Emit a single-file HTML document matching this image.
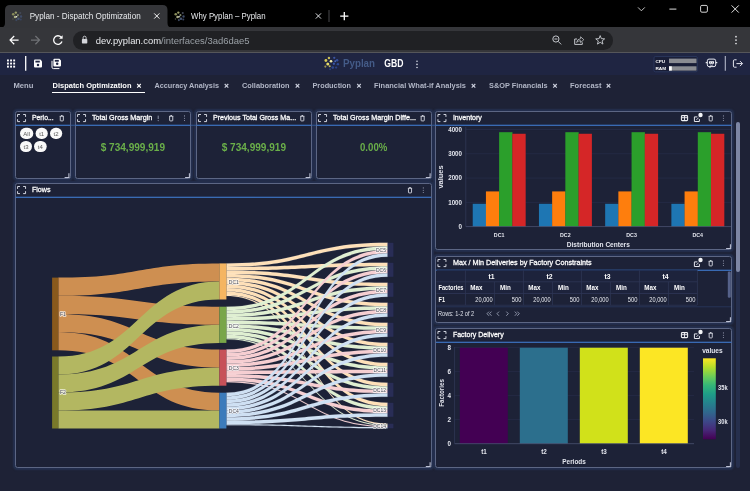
<!DOCTYPE html><html><head><meta charset="utf-8"><title>Pyplan - Dispatch Optimization</title><style>
*{margin:0;padding:0;box-sizing:border-box}
html,body{width:750px;height:491px;overflow:hidden;background:#1e2236;font-family:"Liberation Sans",sans-serif;color:#fff}
.abs{position:absolute}
#root{position:relative;width:750px;height:491px;overflow:hidden;background:#1e2236}
.w{position:absolute;border:1px solid #5c6684;border-radius:2.5px;background:#1d2237;box-shadow:0 0 1.5px 2px #24304f}
.hl{position:absolute;height:1.15px;background:#3d72bd}
svg{position:absolute;left:0;top:0;overflow:visible;will-change:transform;opacity:0.999}
</style></head><body><div id="root">
<div class="abs" style="left:0;top:0;width:750px;height:28px;background:#000"></div>
<div class="abs" style="left:0;top:27px;width:750px;height:26px;background:#35363a;border-bottom:1px solid #55565a"></div>
<div class="abs" style="left:72.5px;top:31px;width:540.5px;height:18.5px;background:#202124;border-radius:9.25px"></div>
<div class="abs" style="left:0;top:53px;width:750px;height:21.5px;background:#1f2542"></div>
<div class="abs" style="left:51.5px;top:92px;width:93.5px;height:1.4px;background:#fff"></div>
<div class="w" style="left:15px;top:111px;width:55.5px;height:68px"></div>
<div class="w" style="left:75px;top:111px;width:116px;height:68px"></div>
<div class="w" style="left:196px;top:111px;width:115.5px;height:68px"></div>
<div class="w" style="left:316px;top:111px;width:115.69999999999999px;height:68px"></div>
<div class="w" style="left:435.4px;top:111px;width:296.6px;height:139px"></div>
<div class="w" style="left:15px;top:183px;width:416.7px;height:285px"></div>
<div class="w" style="left:435.4px;top:256px;width:296.6px;height:67px"></div>
<div class="w" style="left:435.4px;top:328px;width:296.6px;height:140px"></div>
<div class="abs" style="left:736.3px;top:121.5px;width:3.6px;height:346px;background:#262f4d;border-radius:2px"></div>
<div class="abs" style="left:736.3px;top:121.5px;width:3.6px;height:150px;background:#7d86a4;border-radius:2px"></div>
<svg width="750" height="491" viewBox="0 0 750 491" font-family="Liberation Sans, sans-serif"><path d="M0.5,27.5 Q5,27.5 5,23 L5,10 Q5,5 10,5 L162.5,5 Q167.5,5 167.5,10 L167.5,23 Q167.5,27.5 172,27.5 Z" fill="#35363a"/><text x="29.70" y="18.90" font-size="8.6" fill="#e8eaed" font-weight="normal" text-anchor="start" textLength="111.0" lengthAdjust="spacingAndGlyphs" >Pyplan - Dispatch Optimization</text><text x="191.00" y="18.90" font-size="8.6" fill="#e8eaed" font-weight="normal" text-anchor="start" textLength="74.6" lengthAdjust="spacingAndGlyphs" >Why Pyplan – Pyplan</text><text x="95.80" y="43.70" font-size="9.6" fill="#e8eaed" font-weight="normal" text-anchor="start" textLength="65.2" lengthAdjust="spacingAndGlyphs" >dev.pyplan.com</text><text x="161.00" y="43.70" font-size="9.6" fill="#9aa0a6" font-weight="normal" text-anchor="start" textLength="88.6" lengthAdjust="spacingAndGlyphs" >/interfaces/3ad6dae5</text><text x="343.00" y="67.40" font-size="10.2" fill="#455c88" font-weight="bold" text-anchor="start" textLength="32.0" lengthAdjust="spacingAndGlyphs" >Pyplan</text><text x="384.20" y="67.40" font-size="10.2" fill="#fff" font-weight="bold" text-anchor="start" textLength="19.2" lengthAdjust="spacingAndGlyphs" >GBD</text><text x="13.40" y="87.80" font-size="8" fill="#b2b7c7" font-weight="bold" text-anchor="start" textLength="20.0" lengthAdjust="spacingAndGlyphs" >Menu</text><text x="52.50" y="87.80" font-size="8" fill="#fff" font-weight="bold" text-anchor="start" textLength="79.0" lengthAdjust="spacingAndGlyphs" >Dispatch Optimization</text><path d="M137.2,84.0l3.6,3.6m0,-3.6l-3.6,3.6" stroke="#fff" stroke-width="1.1" fill="none"/><text x="154.50" y="87.80" font-size="8" fill="#b2b7c7" font-weight="bold" text-anchor="start" textLength="64.5" lengthAdjust="spacingAndGlyphs" >Accuracy Analysis</text><path d="M224.7,84.0l3.6,3.6m0,-3.6l-3.6,3.6" stroke="#cfd3e0" stroke-width="1.1" fill="none"/><text x="242.00" y="87.80" font-size="8" fill="#b2b7c7" font-weight="bold" text-anchor="start" textLength="47.5" lengthAdjust="spacingAndGlyphs" >Collaboration</text><path d="M295.7,84.0l3.6,3.6m0,-3.6l-3.6,3.6" stroke="#cfd3e0" stroke-width="1.1" fill="none"/><text x="312.50" y="87.80" font-size="8" fill="#b2b7c7" font-weight="bold" text-anchor="start" textLength="38.5" lengthAdjust="spacingAndGlyphs" >Production</text><path d="M357.2,84.0l3.6,3.6m0,-3.6l-3.6,3.6" stroke="#cfd3e0" stroke-width="1.1" fill="none"/><text x="374.00" y="87.80" font-size="8" fill="#b2b7c7" font-weight="bold" text-anchor="start" textLength="92.0" lengthAdjust="spacingAndGlyphs" >Financial What-if Analysis</text><path d="M471.7,84.0l3.6,3.6m0,-3.6l-3.6,3.6" stroke="#cfd3e0" stroke-width="1.1" fill="none"/><text x="489.00" y="87.80" font-size="8" fill="#b2b7c7" font-weight="bold" text-anchor="start" textLength="58.5" lengthAdjust="spacingAndGlyphs" >S&amp;OP Financials</text><path d="M553.2,84.0l3.6,3.6m0,-3.6l-3.6,3.6" stroke="#cfd3e0" stroke-width="1.1" fill="none"/><text x="570.00" y="87.80" font-size="8" fill="#b2b7c7" font-weight="bold" text-anchor="start" textLength="31.5" lengthAdjust="spacingAndGlyphs" >Forecast</text><path d="M606.7,84.0l3.6,3.6m0,-3.6l-3.6,3.6" stroke="#cfd3e0" stroke-width="1.1" fill="none"/><rect x="15.5" y="124.7" width="54.5" height="1.2" fill="#3d74c2"/><path d="M17.55,116.9v-2.4h2.4 M23.150000000000002,114.5h2.4v2.4 M25.55,119.19999999999999v2.4h-2.4 M19.95,121.6h-2.4v-2.4" stroke="#dcdfe9" stroke-width="0.95" fill="none"/><text x="31.90" y="120.40" font-size="7.6" fill="#fff" font-weight="normal" text-anchor="start" textLength="21.8" lengthAdjust="spacingAndGlyphs" stroke="#fff" stroke-width="0.28">Perio...</text><path d="M64.60,177.50h4.3v-4.3" stroke="#c0c5d8" stroke-width="1.05" fill="none"/><path d="M59.699999999999996,116.3h4.2 M61.0,115.5h1.6 M60.25,116.4v3.9q0,0.6 0.6,0.6h1.9q0.6,0 0.6,-0.6v-3.9" stroke="#e4e6ee" stroke-width="0.85" fill="none" stroke-linejoin="round"/><rect x="75.5" y="124.7" width="115" height="1.2" fill="#3d74c2"/><path d="M77.55,116.9v-2.4h2.4 M83.14999999999999,114.5h2.4v2.4 M85.55,119.19999999999999v2.4h-2.4 M79.95,121.6h-2.4v-2.4" stroke="#dcdfe9" stroke-width="0.95" fill="none"/><text x="91.90" y="120.40" font-size="7.6" fill="#fff" font-weight="normal" text-anchor="start" textLength="60.5" lengthAdjust="spacingAndGlyphs" stroke="#fff" stroke-width="0.28">Total Gross Margin</text><path d="M185.10,177.50h4.3v-4.3" stroke="#c0c5d8" stroke-width="1.05" fill="none"/><path d="M158.2,115.6v3.4" stroke="#9aa0b6" stroke-width="0.9"/><circle cx="158.2" cy="120.6" r="0.55" fill="#9aa0b6"/><path d="M169.1,116.3h4.2 M170.39999999999998,115.5h1.6 M169.64999999999998,116.4v3.9q0,0.6 0.6,0.6h1.9q0.6,0 0.6,-0.6v-3.9" stroke="#e4e6ee" stroke-width="0.85" fill="none" stroke-linejoin="round"/><circle cx="184.5" cy="115.9" r="0.55" fill="#989eb4"/><circle cx="184.5" cy="118.2" r="0.55" fill="#989eb4"/><circle cx="184.5" cy="120.5" r="0.55" fill="#989eb4"/><rect x="196.5" y="124.7" width="114.5" height="1.2" fill="#3d74c2"/><path d="M198.55,116.9v-2.4h2.4 M204.15,114.5h2.4v2.4 M206.55,119.19999999999999v2.4h-2.4 M200.95000000000002,121.6h-2.4v-2.4" stroke="#dcdfe9" stroke-width="0.95" fill="none"/><text x="212.90" y="120.40" font-size="7.6" fill="#fff" font-weight="normal" text-anchor="start" textLength="83.3" lengthAdjust="spacingAndGlyphs" stroke="#fff" stroke-width="0.28">Previous Total Gross Ma...</text><path d="M305.60,177.50h4.3v-4.3" stroke="#c0c5d8" stroke-width="1.05" fill="none"/><path d="M300.2,116.3h4.2 M301.5,115.5h1.6 M300.75,116.4v3.9q0,0.6 0.6,0.6h1.9q0.6,0 0.6,-0.6v-3.9" stroke="#e4e6ee" stroke-width="0.85" fill="none" stroke-linejoin="round"/><rect x="316.5" y="124.7" width="114.69999999999999" height="1.2" fill="#3d74c2"/><path d="M318.55,116.9v-2.4h2.4 M324.15000000000003,114.5h2.4v2.4 M326.55,119.19999999999999v2.4h-2.4 M320.95,121.6h-2.4v-2.4" stroke="#dcdfe9" stroke-width="0.95" fill="none"/><text x="332.90" y="120.40" font-size="7.6" fill="#fff" font-weight="normal" text-anchor="start" textLength="83.0" lengthAdjust="spacingAndGlyphs" stroke="#fff" stroke-width="0.28">Total Gross Margin Diffe...</text><path d="M425.80,177.50h4.3v-4.3" stroke="#c0c5d8" stroke-width="1.05" fill="none"/><path d="M420.59999999999997,116.3h4.2 M421.9,115.5h1.6 M421.15,116.4v3.9q0,0.6 0.6,0.6h1.9q0.6,0 0.6,-0.6v-3.9" stroke="#e4e6ee" stroke-width="0.85" fill="none" stroke-linejoin="round"/><rect x="435.9" y="124.7" width="295.6" height="1.2" fill="#3d74c2"/><path d="M437.95,116.9v-2.4h2.4 M443.55,114.5h2.4v2.4 M445.95,119.19999999999999v2.4h-2.4 M440.34999999999997,121.6h-2.4v-2.4" stroke="#dcdfe9" stroke-width="0.95" fill="none"/><text x="452.90" y="120.40" font-size="7.6" fill="#fff" font-weight="normal" text-anchor="start" textLength="29.0" lengthAdjust="spacingAndGlyphs" stroke="#fff" stroke-width="0.28">Inventory</text><path d="M726.10,248.50h4.3v-4.3" stroke="#c0c5d8" stroke-width="1.05" fill="none"/><rect x="681.4" y="115.6" width="6.2" height="5" rx="0.9" fill="none" stroke="#f0f1f5" stroke-width="1.05"/><path d="M681.4,117.69999999999999h6.2 M684.5,115.6v5" stroke="#f0f1f5" stroke-width="0.9"/><path d="M697.4,116.9h-3v4.6h5v-2.4" fill="none" stroke="#e4e6ee" stroke-width="1"/><path d="M696.4,119.9l2.2,-2.2" stroke="#e4e6ee" stroke-width="0.9"/><circle cx="700.5" cy="115.0" r="2.2" fill="#f4f5f8"/><path d="M708.6,116.3h4.2 M709.9000000000001,115.5h1.6 M709.1500000000001,116.4v3.9q0,0.6 0.6,0.6h1.9q0.6,0 0.6,-0.6v-3.9" stroke="#e4e6ee" stroke-width="0.85" fill="none" stroke-linejoin="round"/><circle cx="723.4" cy="115.9" r="0.55" fill="#989eb4"/><circle cx="723.4" cy="118.2" r="0.55" fill="#989eb4"/><circle cx="723.4" cy="120.5" r="0.55" fill="#989eb4"/><rect x="15.5" y="196.7" width="415.7" height="1.2" fill="#3d74c2"/><path d="M17.55,188.9v-2.4h2.4 M23.150000000000002,186.5h2.4v2.4 M25.55,191.2v2.4h-2.4 M19.95,193.6h-2.4v-2.4" stroke="#dcdfe9" stroke-width="0.95" fill="none"/><text x="31.90" y="192.40" font-size="7.6" fill="#fff" font-weight="normal" text-anchor="start" textLength="18.7" lengthAdjust="spacingAndGlyphs" stroke="#fff" stroke-width="0.28">Flows</text><path d="M425.80,466.50h4.3v-4.3" stroke="#c0c5d8" stroke-width="1.05" fill="none"/><path d="M407.9,188.29999999999998h4.2 M409.2,187.5h1.6 M408.45,188.39999999999998v3.9q0,0.6 0.6,0.6h1.9q0.6,0 0.6,-0.6v-3.9" stroke="#e4e6ee" stroke-width="0.85" fill="none" stroke-linejoin="round"/><circle cx="423.3" cy="187.89999999999998" r="0.55" fill="#989eb4"/><circle cx="423.3" cy="190.2" r="0.55" fill="#989eb4"/><circle cx="423.3" cy="192.5" r="0.55" fill="#989eb4"/><rect x="435.9" y="269.7" width="295.6" height="1.2" fill="#3d74c2"/><path d="M437.95,261.9v-2.4h2.4 M443.55,259.5h2.4v2.4 M445.95,264.20000000000005v2.4h-2.4 M440.34999999999997,266.6h-2.4v-2.4" stroke="#dcdfe9" stroke-width="0.95" fill="none"/><text x="452.90" y="265.40" font-size="7.6" fill="#fff" font-weight="normal" text-anchor="start" textLength="138.7" lengthAdjust="spacingAndGlyphs" stroke="#fff" stroke-width="0.28">Max / Min Deliveries by Factory Constraints</text><path d="M726.10,321.50h4.3v-4.3" stroke="#c0c5d8" stroke-width="1.05" fill="none"/><path d="M697.4,261.9h-3v4.6h5v-2.4" fill="none" stroke="#e4e6ee" stroke-width="1"/><path d="M696.4,264.9l2.2,-2.2" stroke="#e4e6ee" stroke-width="0.9"/><circle cx="700.5" cy="260.0" r="2.2" fill="#f4f5f8"/><path d="M708.6,261.3h4.2 M709.9000000000001,260.5h1.6 M709.1500000000001,261.4v3.9q0,0.6 0.6,0.6h1.9q0.6,0 0.6,-0.6v-3.9" stroke="#e4e6ee" stroke-width="0.85" fill="none" stroke-linejoin="round"/><circle cx="723.4" cy="260.9" r="0.55" fill="#989eb4"/><circle cx="723.4" cy="263.2" r="0.55" fill="#989eb4"/><circle cx="723.4" cy="265.5" r="0.55" fill="#989eb4"/><rect x="435.9" y="341.7" width="295.6" height="1.2" fill="#3d74c2"/><path d="M437.95,333.9v-2.4h2.4 M443.55,331.5h2.4v2.4 M445.95,336.20000000000005v2.4h-2.4 M440.34999999999997,338.6h-2.4v-2.4" stroke="#dcdfe9" stroke-width="0.95" fill="none"/><text x="452.90" y="337.40" font-size="7.6" fill="#fff" font-weight="normal" text-anchor="start" textLength="50.8" lengthAdjust="spacingAndGlyphs" stroke="#fff" stroke-width="0.28">Factory Delivery</text><path d="M726.10,466.50h4.3v-4.3" stroke="#c0c5d8" stroke-width="1.05" fill="none"/><rect x="681.4" y="332.6" width="6.2" height="5" rx="0.9" fill="none" stroke="#f0f1f5" stroke-width="1.05"/><path d="M681.4,334.70000000000005h6.2 M684.5,332.6v5" stroke="#f0f1f5" stroke-width="0.9"/><path d="M697.4,333.9h-3v4.6h5v-2.4" fill="none" stroke="#e4e6ee" stroke-width="1"/><path d="M696.4,336.9l2.2,-2.2" stroke="#e4e6ee" stroke-width="0.9"/><circle cx="700.5" cy="332.0" r="2.2" fill="#f4f5f8"/><path d="M708.6,333.3h4.2 M709.9000000000001,332.5h1.6 M709.1500000000001,333.4v3.9q0,0.6 0.6,0.6h1.9q0.6,0 0.6,-0.6v-3.9" stroke="#e4e6ee" stroke-width="0.85" fill="none" stroke-linejoin="round"/><circle cx="723.4" cy="332.9" r="0.55" fill="#989eb4"/><circle cx="723.4" cy="335.2" r="0.55" fill="#989eb4"/><circle cx="723.4" cy="337.5" r="0.55" fill="#989eb4"/><rect x="70.5" y="124.7" width="4.5" height="1.2" fill="#3d74c2" opacity="0.5"/><rect x="191" y="124.7" width="5" height="1.2" fill="#3d74c2" opacity="0.5"/><rect x="311.5" y="124.7" width="4.5" height="1.2" fill="#3d74c2" opacity="0.5"/><rect x="432" y="124.7" width="4" height="1.2" fill="#3d74c2" opacity="0.5"/><text x="100.70" y="150.70" font-size="11.2" fill="#6bb04a" font-weight="bold" text-anchor="start" textLength="64.3" lengthAdjust="spacingAndGlyphs" >$ 734,999,919</text><text x="221.70" y="150.70" font-size="11.2" fill="#6bb04a" font-weight="bold" text-anchor="start" textLength="64.3" lengthAdjust="spacingAndGlyphs" >$ 734,999,919</text><text x="360.00" y="150.70" font-size="11.2" fill="#6bb04a" font-weight="bold" text-anchor="start" textLength="27.3" lengthAdjust="spacingAndGlyphs" >0.00%</text><rect x="20" y="127.8" width="13.3" height="11.2" rx="5.6" fill="#fafafa"/><text x="26.65" y="135.50" font-size="6" fill="#5a5a5a" font-weight="normal" text-anchor="middle" >All</text><rect x="35.6" y="127.8" width="12.2" height="11.2" rx="5.6" fill="#fafafa"/><text x="41.70" y="135.50" font-size="6" fill="#5a5a5a" font-weight="normal" text-anchor="middle" >t1</text><rect x="50" y="127.8" width="12.2" height="11.2" rx="5.6" fill="#fafafa"/><text x="56.10" y="135.50" font-size="6" fill="#5a5a5a" font-weight="normal" text-anchor="middle" >t2</text><rect x="20" y="141" width="12.0" height="11.0" rx="5.6" fill="#fafafa"/><text x="26.00" y="148.60" font-size="6" fill="#5a5a5a" font-weight="normal" text-anchor="middle" >t3</text><rect x="34" y="141" width="12.7" height="11.0" rx="5.6" fill="#fafafa"/><text x="40.35" y="148.60" font-size="6" fill="#5a5a5a" font-weight="normal" text-anchor="middle" >t4</text><line x1="465.8" x2="731" y1="202.33" y2="202.33" stroke="#2b3250" stroke-width="0.6"/><line x1="465.8" x2="731" y1="178.06" y2="178.06" stroke="#2b3250" stroke-width="0.6"/><line x1="465.8" x2="731" y1="153.79" y2="153.79" stroke="#2b3250" stroke-width="0.6"/><line x1="465.8" x2="731" y1="129.52" y2="129.52" stroke="#2b3250" stroke-width="0.6"/><rect x="472.72" y="203.79" width="13.35" height="22.81" fill="#1f77b4"/><rect x="485.92" y="191.41" width="13.35" height="35.19" fill="#ff7f0e"/><rect x="499.12" y="132.19" width="13.35" height="94.41" fill="#2ca02c"/><rect x="512.32" y="133.77" width="13.35" height="92.83" fill="#d62728"/><text x="493.82" y="236.70" font-size="6.2" fill="#e4e6ee" font-weight="bold" text-anchor="start" textLength="10.6" lengthAdjust="spacingAndGlyphs" >DC1</text><rect x="538.94" y="203.79" width="13.35" height="22.81" fill="#1f77b4"/><rect x="552.14" y="191.41" width="13.35" height="35.19" fill="#ff7f0e"/><rect x="565.34" y="132.19" width="13.35" height="94.41" fill="#2ca02c"/><rect x="578.54" y="133.77" width="13.35" height="92.83" fill="#d62728"/><text x="560.04" y="236.70" font-size="6.2" fill="#e4e6ee" font-weight="bold" text-anchor="start" textLength="10.6" lengthAdjust="spacingAndGlyphs" >DC2</text><rect x="605.16" y="203.79" width="13.35" height="22.81" fill="#1f77b4"/><rect x="618.36" y="191.41" width="13.35" height="35.19" fill="#ff7f0e"/><rect x="631.56" y="132.19" width="13.35" height="94.41" fill="#2ca02c"/><rect x="644.76" y="133.77" width="13.35" height="92.83" fill="#d62728"/><text x="626.26" y="236.70" font-size="6.2" fill="#e4e6ee" font-weight="bold" text-anchor="start" textLength="10.6" lengthAdjust="spacingAndGlyphs" >DC3</text><rect x="671.38" y="203.79" width="13.35" height="22.81" fill="#1f77b4"/><rect x="684.58" y="191.41" width="13.35" height="35.19" fill="#ff7f0e"/><rect x="697.78" y="132.19" width="13.35" height="94.41" fill="#2ca02c"/><rect x="710.98" y="133.77" width="13.35" height="92.83" fill="#d62728"/><text x="692.48" y="236.70" font-size="6.2" fill="#e4e6ee" font-weight="bold" text-anchor="start" textLength="10.6" lengthAdjust="spacingAndGlyphs" >DC4</text><line x1="465.8" x2="731" y1="226.6" y2="226.6" stroke="#4c5474" stroke-width="0.8"/><line x1="465.8" x2="465.8" y1="127" y2="226.6" stroke="#353d5c" stroke-width="0.7"/><text x="458.55" y="228.90" font-size="6.4" fill="#e4e6ee" font-weight="bold" text-anchor="start" textLength="3.5" lengthAdjust="spacingAndGlyphs" >0</text><text x="448.20" y="204.63" font-size="6.4" fill="#e4e6ee" font-weight="bold" text-anchor="start" textLength="13.8" lengthAdjust="spacingAndGlyphs" >1000</text><text x="448.20" y="180.36" font-size="6.4" fill="#e4e6ee" font-weight="bold" text-anchor="start" textLength="13.8" lengthAdjust="spacingAndGlyphs" >2000</text><text x="448.20" y="156.09" font-size="6.4" fill="#e4e6ee" font-weight="bold" text-anchor="start" textLength="13.8" lengthAdjust="spacingAndGlyphs" >3000</text><text x="448.20" y="131.82" font-size="6.4" fill="#e4e6ee" font-weight="bold" text-anchor="start" textLength="13.8" lengthAdjust="spacingAndGlyphs" >4000</text><text x="566.80" y="247.30" font-size="7.2" fill="#e4e6ee" font-weight="bold" text-anchor="start" textLength="63.0" lengthAdjust="spacingAndGlyphs" >Distribution Centers</text><text transform="translate(443.4,188.6) rotate(-90)" font-size="7.2" font-weight="bold" fill="#e4e6ee" textLength="23.3" lengthAdjust="spacingAndGlyphs">values</text><line x1="454.6" x2="694" y1="419.70" y2="419.70" stroke="#2b3250" stroke-width="0.6"/><line x1="454.6" x2="694" y1="395.70" y2="395.70" stroke="#2b3250" stroke-width="0.6"/><line x1="454.6" x2="694" y1="371.70" y2="371.70" stroke="#2b3250" stroke-width="0.6"/><line x1="454.6" x2="694" y1="347.70" y2="347.70" stroke="#2b3250" stroke-width="0.6"/><rect x="459.80" y="347.70" width="48.0" height="96.00" fill="#440154"/><text x="484.00" y="453.50" font-size="6.3" fill="#e4e6ee" font-weight="bold" text-anchor="middle" >t1</text><rect x="519.80" y="347.70" width="48.0" height="96.00" fill="#2d708e"/><text x="544.00" y="453.50" font-size="6.3" fill="#e4e6ee" font-weight="bold" text-anchor="middle" >t2</text><rect x="579.80" y="347.70" width="48.0" height="96.00" fill="#d2e21b"/><text x="604.00" y="453.50" font-size="6.3" fill="#e4e6ee" font-weight="bold" text-anchor="middle" >t3</text><rect x="639.80" y="347.70" width="48.0" height="96.00" fill="#fde725"/><text x="664.00" y="453.50" font-size="6.3" fill="#e4e6ee" font-weight="bold" text-anchor="middle" >t4</text><line x1="454.6" x2="694" y1="443.7" y2="443.7" stroke="#4c5474" stroke-width="0.8"/><line x1="454.6" x2="454.6" y1="347" y2="443.7" stroke="#353d5c" stroke-width="0.7"/><text x="447.55" y="446.00" font-size="6.4" fill="#e4e6ee" font-weight="bold" text-anchor="start" textLength="3.5" lengthAdjust="spacingAndGlyphs" >0</text><text x="447.55" y="422.00" font-size="6.4" fill="#e4e6ee" font-weight="bold" text-anchor="start" textLength="3.5" lengthAdjust="spacingAndGlyphs" >2</text><text x="447.55" y="398.00" font-size="6.4" fill="#e4e6ee" font-weight="bold" text-anchor="start" textLength="3.5" lengthAdjust="spacingAndGlyphs" >4</text><text x="447.55" y="374.00" font-size="6.4" fill="#e4e6ee" font-weight="bold" text-anchor="start" textLength="3.5" lengthAdjust="spacingAndGlyphs" >6</text><text x="447.55" y="350.00" font-size="6.4" fill="#e4e6ee" font-weight="bold" text-anchor="start" textLength="3.5" lengthAdjust="spacingAndGlyphs" >8</text><text x="562.30" y="464.00" font-size="7.2" fill="#e4e6ee" font-weight="bold" text-anchor="start" textLength="23.5" lengthAdjust="spacingAndGlyphs" >Periods</text><text transform="translate(444,406.8) rotate(-90)" font-size="7.2" font-weight="bold" fill="#e4e6ee" textLength="27.7" lengthAdjust="spacingAndGlyphs">Factories</text><defs><linearGradient id="vir" x1="0" y1="1" x2="0" y2="0"><stop offset="0" stop-color="#440154"/><stop offset="0.111" stop-color="#482878"/><stop offset="0.222" stop-color="#3e4989"/><stop offset="0.333" stop-color="#31688e"/><stop offset="0.444" stop-color="#26828e"/><stop offset="0.556" stop-color="#1f9e89"/><stop offset="0.667" stop-color="#35b779"/><stop offset="0.778" stop-color="#6ece58"/><stop offset="0.889" stop-color="#b5de2b"/><stop offset="1" stop-color="#fde725"/></linearGradient></defs><rect x="703" y="358.3" width="12.8" height="81" fill="url(#vir)"/><text x="702.20" y="353.00" font-size="7.2" fill="#e4e6ee" font-weight="bold" text-anchor="start" textLength="20.5" lengthAdjust="spacingAndGlyphs" >values</text><text x="718.00" y="390.30" font-size="6.4" fill="#e4e6ee" font-weight="bold" text-anchor="start" textLength="9.6" lengthAdjust="spacingAndGlyphs" >35k</text><text x="718.00" y="423.90" font-size="6.4" fill="#e4e6ee" font-weight="bold" text-anchor="start" textLength="9.6" lengthAdjust="spacingAndGlyphs" >30k</text><path d="M58.30,277.60C138.85,277.60 138.85,263.40 219.40,263.40L219.40,281.45C138.85,281.45 138.85,295.78 58.30,295.78Z" fill="#cf9052" fill-opacity="1" /><path d="M58.30,295.78C138.85,295.78 138.85,306.70 219.40,306.70L219.40,324.80C138.85,324.80 138.85,313.95 58.30,313.95Z" fill="#cf9052" fill-opacity="1" /><path d="M58.30,313.95C138.85,313.95 138.85,349.60 219.40,349.60L219.40,367.65C138.85,367.65 138.85,332.12 58.30,332.12Z" fill="#cf9052" fill-opacity="1" /><path d="M58.30,332.12C138.85,332.12 138.85,392.70 219.40,392.70L219.40,410.60C138.85,410.60 138.85,350.30 58.30,350.30Z" fill="#cf9052" fill-opacity="1" /><path d="M58.30,356.50C138.85,356.50 138.85,281.45 219.40,281.45L219.40,299.50C138.85,299.50 138.85,374.50 58.30,374.50Z" fill="#b4b862" fill-opacity="1" /><path d="M58.30,374.50C138.85,374.50 138.85,324.80 219.40,324.80L219.40,342.90C138.85,342.90 138.85,392.50 58.30,392.50Z" fill="#b4b862" fill-opacity="1" /><path d="M58.30,392.50C138.85,392.50 138.85,367.65 219.40,367.65L219.40,385.70C138.85,385.70 138.85,410.50 58.30,410.50Z" fill="#b4b862" fill-opacity="1" /><path d="M58.30,410.50C138.85,410.50 138.85,410.60 219.40,410.60L219.40,428.50C138.85,428.50 138.85,428.50 58.30,428.50Z" fill="#b4b862" fill-opacity="1" /><path d="M226.40,263.40C307.05,263.40 307.05,242.80 387.70,242.80L387.70,246.30C307.05,246.30 307.05,266.90 226.40,266.90Z" fill="#ffe1b9" fill-opacity="1" stroke="#fff" stroke-opacity="0.35" stroke-width="0.3"/><path d="M226.40,266.90C307.05,266.90 307.05,262.80 387.70,262.80L387.70,266.30C307.05,266.30 307.05,270.40 226.40,270.40Z" fill="#ffe1b9" fill-opacity="1" stroke="#fff" stroke-opacity="0.35" stroke-width="0.3"/><path d="M226.40,270.40C307.05,270.40 307.05,282.80 387.70,282.80L387.70,286.30C307.05,286.30 307.05,273.90 226.40,273.90Z" fill="#ffe1b9" fill-opacity="1" stroke="#fff" stroke-opacity="0.35" stroke-width="0.3"/><path d="M226.40,273.90C307.05,273.90 307.05,302.80 387.70,302.80L387.70,306.30C307.05,306.30 307.05,277.40 226.40,277.40Z" fill="#ffe1b9" fill-opacity="1" stroke="#fff" stroke-opacity="0.35" stroke-width="0.3"/><path d="M226.40,277.40C307.05,277.40 307.05,322.80 387.70,322.80L387.70,326.30C307.05,326.30 307.05,280.90 226.40,280.90Z" fill="#ffe1b9" fill-opacity="1" stroke="#fff" stroke-opacity="0.35" stroke-width="0.3"/><path d="M226.40,280.90C307.05,280.90 307.05,342.80 387.70,342.80L387.70,346.30C307.05,346.30 307.05,284.40 226.40,284.40Z" fill="#ffe1b9" fill-opacity="1" stroke="#fff" stroke-opacity="0.35" stroke-width="0.3"/><path d="M226.40,284.40C307.05,284.40 307.05,362.80 387.70,362.80L387.70,366.30C307.05,366.30 307.05,287.90 226.40,287.90Z" fill="#ffe1b9" fill-opacity="1" stroke="#fff" stroke-opacity="0.35" stroke-width="0.3"/><path d="M226.40,287.90C307.05,287.90 307.05,382.80 387.70,382.80L387.70,386.30C307.05,386.30 307.05,291.40 226.40,291.40Z" fill="#ffe1b9" fill-opacity="1" stroke="#fff" stroke-opacity="0.35" stroke-width="0.3"/><path d="M226.40,291.40C307.05,291.40 307.05,402.80 387.70,402.80L387.70,406.30C307.05,406.30 307.05,294.90 226.40,294.90Z" fill="#ffe1b9" fill-opacity="1" stroke="#fff" stroke-opacity="0.35" stroke-width="0.3"/><path d="M226.40,294.90C307.05,294.90 307.05,423.70 387.70,423.70L387.70,424.85C307.05,424.85 307.05,296.05 226.40,296.05Z" fill="#ffe1b9" fill-opacity="1" stroke="#fff" stroke-opacity="0.35" stroke-width="0.3"/><path d="M226.40,306.70C307.05,306.70 307.05,246.30 387.70,246.30L387.70,249.80C307.05,249.80 307.05,310.20 226.40,310.20Z" fill="#e0f0d2" fill-opacity="1" stroke="#fff" stroke-opacity="0.35" stroke-width="0.3"/><path d="M226.40,310.20C307.05,310.20 307.05,266.30 387.70,266.30L387.70,269.80C307.05,269.80 307.05,313.70 226.40,313.70Z" fill="#e0f0d2" fill-opacity="1" stroke="#fff" stroke-opacity="0.35" stroke-width="0.3"/><path d="M226.40,313.70C307.05,313.70 307.05,286.30 387.70,286.30L387.70,289.80C307.05,289.80 307.05,317.20 226.40,317.20Z" fill="#e0f0d2" fill-opacity="1" stroke="#fff" stroke-opacity="0.35" stroke-width="0.3"/><path d="M226.40,317.20C307.05,317.20 307.05,306.30 387.70,306.30L387.70,309.80C307.05,309.80 307.05,320.70 226.40,320.70Z" fill="#e0f0d2" fill-opacity="1" stroke="#fff" stroke-opacity="0.35" stroke-width="0.3"/><path d="M226.40,320.70C307.05,320.70 307.05,326.30 387.70,326.30L387.70,329.80C307.05,329.80 307.05,324.20 226.40,324.20Z" fill="#e0f0d2" fill-opacity="1" stroke="#fff" stroke-opacity="0.35" stroke-width="0.3"/><path d="M226.40,324.20C307.05,324.20 307.05,346.30 387.70,346.30L387.70,349.80C307.05,349.80 307.05,327.70 226.40,327.70Z" fill="#e0f0d2" fill-opacity="1" stroke="#fff" stroke-opacity="0.35" stroke-width="0.3"/><path d="M226.40,327.70C307.05,327.70 307.05,366.30 387.70,366.30L387.70,369.80C307.05,369.80 307.05,331.20 226.40,331.20Z" fill="#e0f0d2" fill-opacity="1" stroke="#fff" stroke-opacity="0.35" stroke-width="0.3"/><path d="M226.40,331.20C307.05,331.20 307.05,386.30 387.70,386.30L387.70,389.80C307.05,389.80 307.05,334.70 226.40,334.70Z" fill="#e0f0d2" fill-opacity="1" stroke="#fff" stroke-opacity="0.35" stroke-width="0.3"/><path d="M226.40,334.70C307.05,334.70 307.05,406.30 387.70,406.30L387.70,409.80C307.05,409.80 307.05,338.20 226.40,338.20Z" fill="#e0f0d2" fill-opacity="1" stroke="#fff" stroke-opacity="0.35" stroke-width="0.3"/><path d="M226.40,338.20C307.05,338.20 307.05,424.85 387.70,424.85L387.70,426.00C307.05,426.00 307.05,339.35 226.40,339.35Z" fill="#e0f0d2" fill-opacity="1" stroke="#fff" stroke-opacity="0.35" stroke-width="0.3"/><path d="M226.40,349.60C307.05,349.60 307.05,249.80 387.70,249.80L387.70,253.30C307.05,253.30 307.05,353.10 226.40,353.10Z" fill="#f7cfd2" fill-opacity="1" stroke="#fff" stroke-opacity="0.35" stroke-width="0.3"/><path d="M226.40,353.10C307.05,353.10 307.05,269.80 387.70,269.80L387.70,273.30C307.05,273.30 307.05,356.60 226.40,356.60Z" fill="#f7cfd2" fill-opacity="1" stroke="#fff" stroke-opacity="0.35" stroke-width="0.3"/><path d="M226.40,356.60C307.05,356.60 307.05,289.80 387.70,289.80L387.70,293.30C307.05,293.30 307.05,360.10 226.40,360.10Z" fill="#f7cfd2" fill-opacity="1" stroke="#fff" stroke-opacity="0.35" stroke-width="0.3"/><path d="M226.40,360.10C307.05,360.10 307.05,309.80 387.70,309.80L387.70,313.30C307.05,313.30 307.05,363.60 226.40,363.60Z" fill="#f7cfd2" fill-opacity="1" stroke="#fff" stroke-opacity="0.35" stroke-width="0.3"/><path d="M226.40,363.60C307.05,363.60 307.05,329.80 387.70,329.80L387.70,333.30C307.05,333.30 307.05,367.10 226.40,367.10Z" fill="#f7cfd2" fill-opacity="1" stroke="#fff" stroke-opacity="0.35" stroke-width="0.3"/><path d="M226.40,367.10C307.05,367.10 307.05,349.80 387.70,349.80L387.70,353.30C307.05,353.30 307.05,370.60 226.40,370.60Z" fill="#f7cfd2" fill-opacity="1" stroke="#fff" stroke-opacity="0.35" stroke-width="0.3"/><path d="M226.40,370.60C307.05,370.60 307.05,369.80 387.70,369.80L387.70,373.30C307.05,373.30 307.05,374.10 226.40,374.10Z" fill="#f7cfd2" fill-opacity="1" stroke="#fff" stroke-opacity="0.35" stroke-width="0.3"/><path d="M226.40,374.10C307.05,374.10 307.05,389.80 387.70,389.80L387.70,393.30C307.05,393.30 307.05,377.60 226.40,377.60Z" fill="#f7cfd2" fill-opacity="1" stroke="#fff" stroke-opacity="0.35" stroke-width="0.3"/><path d="M226.40,377.60C307.05,377.60 307.05,409.80 387.70,409.80L387.70,413.30C307.05,413.30 307.05,381.10 226.40,381.10Z" fill="#f7cfd2" fill-opacity="1" stroke="#fff" stroke-opacity="0.35" stroke-width="0.3"/><path d="M226.40,381.10C307.05,381.10 307.05,426.00 387.70,426.00L387.70,427.15C307.05,427.15 307.05,382.25 226.40,382.25Z" fill="#f7cfd2" fill-opacity="1" stroke="#fff" stroke-opacity="0.35" stroke-width="0.3"/><path d="M226.40,392.70C307.05,392.70 307.05,253.30 387.70,253.30L387.70,256.80C307.05,256.80 307.05,396.20 226.40,396.20Z" fill="#cfe1f4" fill-opacity="1" stroke="#fff" stroke-opacity="0.35" stroke-width="0.3"/><path d="M226.40,396.20C307.05,396.20 307.05,273.30 387.70,273.30L387.70,276.80C307.05,276.80 307.05,399.70 226.40,399.70Z" fill="#cfe1f4" fill-opacity="1" stroke="#fff" stroke-opacity="0.35" stroke-width="0.3"/><path d="M226.40,399.70C307.05,399.70 307.05,293.30 387.70,293.30L387.70,296.80C307.05,296.80 307.05,403.20 226.40,403.20Z" fill="#cfe1f4" fill-opacity="1" stroke="#fff" stroke-opacity="0.35" stroke-width="0.3"/><path d="M226.40,403.20C307.05,403.20 307.05,313.30 387.70,313.30L387.70,316.80C307.05,316.80 307.05,406.70 226.40,406.70Z" fill="#cfe1f4" fill-opacity="1" stroke="#fff" stroke-opacity="0.35" stroke-width="0.3"/><path d="M226.40,406.70C307.05,406.70 307.05,333.30 387.70,333.30L387.70,336.80C307.05,336.80 307.05,410.20 226.40,410.20Z" fill="#cfe1f4" fill-opacity="1" stroke="#fff" stroke-opacity="0.35" stroke-width="0.3"/><path d="M226.40,410.20C307.05,410.20 307.05,353.30 387.70,353.30L387.70,356.80C307.05,356.80 307.05,413.70 226.40,413.70Z" fill="#cfe1f4" fill-opacity="1" stroke="#fff" stroke-opacity="0.35" stroke-width="0.3"/><path d="M226.40,413.70C307.05,413.70 307.05,373.30 387.70,373.30L387.70,376.80C307.05,376.80 307.05,417.20 226.40,417.20Z" fill="#cfe1f4" fill-opacity="1" stroke="#fff" stroke-opacity="0.35" stroke-width="0.3"/><path d="M226.40,417.20C307.05,417.20 307.05,393.30 387.70,393.30L387.70,396.80C307.05,396.80 307.05,420.70 226.40,420.70Z" fill="#cfe1f4" fill-opacity="1" stroke="#fff" stroke-opacity="0.35" stroke-width="0.3"/><path d="M226.40,420.70C307.05,420.70 307.05,413.30 387.70,413.30L387.70,416.80C307.05,416.80 307.05,424.20 226.40,424.20Z" fill="#cfe1f4" fill-opacity="1" stroke="#fff" stroke-opacity="0.35" stroke-width="0.3"/><path d="M226.40,424.20C307.05,424.20 307.05,427.15 387.70,427.15L387.70,428.30C307.05,428.30 307.05,425.35 226.40,425.35Z" fill="#cfe1f4" fill-opacity="1" stroke="#fff" stroke-opacity="0.35" stroke-width="0.3"/><rect x="52.1" y="277.6" width="6.20" height="72.70" fill="#8a5a1d"/><rect x="52.1" y="356.5" width="6.20" height="72.00" fill="#7a7a2b"/><rect x="219.4" y="263.4" width="7.00" height="36.10" fill="#f6b662"/><rect x="219.4" y="306.7" width="7.00" height="36.20" fill="#7aa74a"/><rect x="219.4" y="349.6" width="7.00" height="36.10" fill="#c8525a"/><rect x="219.4" y="392.7" width="7.00" height="35.80" fill="#3d7cbc"/><rect x="387.7" y="242.8" width="5.70" height="14.00" fill="#2a2e57"/><rect x="387.7" y="262.8" width="5.70" height="14.00" fill="#2a2e57"/><rect x="387.7" y="282.8" width="5.70" height="14.00" fill="#2a2e57"/><rect x="387.7" y="302.8" width="5.70" height="14.00" fill="#2a2e57"/><rect x="387.7" y="322.8" width="5.70" height="14.00" fill="#2a2e57"/><rect x="387.7" y="342.8" width="5.70" height="14.00" fill="#2a2e57"/><rect x="387.7" y="362.8" width="5.70" height="14.00" fill="#2a2e57"/><rect x="387.7" y="382.8" width="5.70" height="14.00" fill="#2a2e57"/><rect x="387.7" y="402.8" width="5.70" height="14.00" fill="#2a2e57"/><rect x="387.7" y="423.7" width="5.70" height="4.60" fill="#2a2e57"/><text x="60" y="315.7" font-size="5" fill="#4a4a55" stroke="#fff" stroke-opacity="0.8" stroke-width="1.6" paint-order="stroke" stroke-linejoin="round">F1</text><text x="60" y="394.3" font-size="5" fill="#4a4a55" stroke="#fff" stroke-opacity="0.8" stroke-width="1.6" paint-order="stroke" stroke-linejoin="round">F2</text><text x="228.8" y="284.15" font-size="5" fill="#4a4a55" stroke="#fff" stroke-opacity="0.8" stroke-width="1.6" paint-order="stroke" stroke-linejoin="round">DC1</text><text x="228.8" y="327.50" font-size="5" fill="#4a4a55" stroke="#fff" stroke-opacity="0.8" stroke-width="1.6" paint-order="stroke" stroke-linejoin="round">DC2</text><text x="228.8" y="370.35" font-size="5" fill="#4a4a55" stroke="#fff" stroke-opacity="0.8" stroke-width="1.6" paint-order="stroke" stroke-linejoin="round">DC3</text><text x="228.8" y="413.30" font-size="5" fill="#4a4a55" stroke="#fff" stroke-opacity="0.8" stroke-width="1.6" paint-order="stroke" stroke-linejoin="round">DC4</text><text x="386" y="251.60" text-anchor="end" font-size="5" fill="#4a4a55" stroke="#fff" stroke-opacity="0.8" stroke-width="1.6" paint-order="stroke" stroke-linejoin="round">DC5</text><text x="386" y="271.60" text-anchor="end" font-size="5" fill="#4a4a55" stroke="#fff" stroke-opacity="0.8" stroke-width="1.6" paint-order="stroke" stroke-linejoin="round">DC6</text><text x="386" y="291.60" text-anchor="end" font-size="5" fill="#4a4a55" stroke="#fff" stroke-opacity="0.8" stroke-width="1.6" paint-order="stroke" stroke-linejoin="round">DC7</text><text x="386" y="311.60" text-anchor="end" font-size="5" fill="#4a4a55" stroke="#fff" stroke-opacity="0.8" stroke-width="1.6" paint-order="stroke" stroke-linejoin="round">DC8</text><text x="386" y="331.60" text-anchor="end" font-size="5" fill="#4a4a55" stroke="#fff" stroke-opacity="0.8" stroke-width="1.6" paint-order="stroke" stroke-linejoin="round">DC9</text><text x="386" y="351.60" text-anchor="end" font-size="5" fill="#4a4a55" stroke="#fff" stroke-opacity="0.8" stroke-width="1.6" paint-order="stroke" stroke-linejoin="round">DC10</text><text x="386" y="371.60" text-anchor="end" font-size="5" fill="#4a4a55" stroke="#fff" stroke-opacity="0.8" stroke-width="1.6" paint-order="stroke" stroke-linejoin="round">DC11</text><text x="386" y="391.60" text-anchor="end" font-size="5" fill="#4a4a55" stroke="#fff" stroke-opacity="0.8" stroke-width="1.6" paint-order="stroke" stroke-linejoin="round">DC12</text><text x="386" y="411.60" text-anchor="end" font-size="5" fill="#4a4a55" stroke="#fff" stroke-opacity="0.8" stroke-width="1.6" paint-order="stroke" stroke-linejoin="round">DC13</text><text x="386" y="427.80" text-anchor="end" font-size="5" fill="#4a4a55" stroke="#fff" stroke-opacity="0.8" stroke-width="1.6" paint-order="stroke" stroke-linejoin="round">DC14</text><rect x="436.5" y="270.2" width="260.5" height="23.30000000000001" fill="#1e243d"/><line x1="436.5" x2="697" y1="281.8" y2="281.8" stroke="#2e3757" stroke-width="0.8"/><line x1="436.5" x2="697" y1="293.5" y2="293.5" stroke="#2e3757" stroke-width="0.8"/><line x1="436.5" x2="697" y1="305.2" y2="305.2" stroke="#2e3757" stroke-width="0.8"/><line x1="436.5" x2="731" y1="306.8" y2="306.8" stroke="#2b3a62" stroke-width="0.8"/><line x1="465.4" x2="465.4" y1="270.2" y2="305.2" stroke="#2e3757" stroke-width="0.8"/><line x1="494.4" x2="494.4" y1="281.8" y2="305.2" stroke="#2e3757" stroke-width="0.8"/><line x1="523.4" x2="523.4" y1="270.2" y2="305.2" stroke="#2e3757" stroke-width="0.8"/><line x1="552.4" x2="552.4" y1="281.8" y2="305.2" stroke="#2e3757" stroke-width="0.8"/><line x1="581.4" x2="581.4" y1="270.2" y2="305.2" stroke="#2e3757" stroke-width="0.8"/><line x1="610.4" x2="610.4" y1="281.8" y2="305.2" stroke="#2e3757" stroke-width="0.8"/><line x1="639.4" x2="639.4" y1="270.2" y2="305.2" stroke="#2e3757" stroke-width="0.8"/><line x1="668.4" x2="668.4" y1="281.8" y2="305.2" stroke="#2e3757" stroke-width="0.8"/><line x1="697.4" x2="697.4" y1="270.2" y2="305.2" stroke="#2e3757" stroke-width="0.8"/><text x="491.60" y="278.60" font-size="6.8" fill="#fff" font-weight="bold" text-anchor="middle" >t1</text><text x="470.20" y="290.20" font-size="6.8" fill="#fff" font-weight="bold" text-anchor="start" textLength="12.2" lengthAdjust="spacingAndGlyphs" >Max</text><text x="500.00" y="290.20" font-size="6.8" fill="#fff" font-weight="bold" text-anchor="start" textLength="10.8" lengthAdjust="spacingAndGlyphs" >Min</text><text x="492.60" y="302.00" font-size="6.6" fill="#e8eaf0" font-weight="normal" text-anchor="end" textLength="17.3" lengthAdjust="spacingAndGlyphs" >20,000</text><text x="521.50" y="302.00" font-size="6.6" fill="#e8eaf0" font-weight="normal" text-anchor="end" textLength="9.7" lengthAdjust="spacingAndGlyphs" >500</text><text x="549.60" y="278.60" font-size="6.8" fill="#fff" font-weight="bold" text-anchor="middle" >t2</text><text x="528.20" y="290.20" font-size="6.8" fill="#fff" font-weight="bold" text-anchor="start" textLength="12.2" lengthAdjust="spacingAndGlyphs" >Max</text><text x="558.00" y="290.20" font-size="6.8" fill="#fff" font-weight="bold" text-anchor="start" textLength="10.8" lengthAdjust="spacingAndGlyphs" >Min</text><text x="550.60" y="302.00" font-size="6.6" fill="#e8eaf0" font-weight="normal" text-anchor="end" textLength="17.3" lengthAdjust="spacingAndGlyphs" >20,000</text><text x="579.50" y="302.00" font-size="6.6" fill="#e8eaf0" font-weight="normal" text-anchor="end" textLength="9.7" lengthAdjust="spacingAndGlyphs" >500</text><text x="607.60" y="278.60" font-size="6.8" fill="#fff" font-weight="bold" text-anchor="middle" >t3</text><text x="586.20" y="290.20" font-size="6.8" fill="#fff" font-weight="bold" text-anchor="start" textLength="12.2" lengthAdjust="spacingAndGlyphs" >Max</text><text x="616.00" y="290.20" font-size="6.8" fill="#fff" font-weight="bold" text-anchor="start" textLength="10.8" lengthAdjust="spacingAndGlyphs" >Min</text><text x="608.60" y="302.00" font-size="6.6" fill="#e8eaf0" font-weight="normal" text-anchor="end" textLength="17.3" lengthAdjust="spacingAndGlyphs" >20,000</text><text x="637.50" y="302.00" font-size="6.6" fill="#e8eaf0" font-weight="normal" text-anchor="end" textLength="9.7" lengthAdjust="spacingAndGlyphs" >500</text><text x="665.60" y="278.60" font-size="6.8" fill="#fff" font-weight="bold" text-anchor="middle" >t4</text><text x="644.20" y="290.20" font-size="6.8" fill="#fff" font-weight="bold" text-anchor="start" textLength="12.2" lengthAdjust="spacingAndGlyphs" >Max</text><text x="674.00" y="290.20" font-size="6.8" fill="#fff" font-weight="bold" text-anchor="start" textLength="10.8" lengthAdjust="spacingAndGlyphs" >Min</text><text x="666.60" y="302.00" font-size="6.6" fill="#e8eaf0" font-weight="normal" text-anchor="end" textLength="17.3" lengthAdjust="spacingAndGlyphs" >20,000</text><text x="695.50" y="302.00" font-size="6.6" fill="#e8eaf0" font-weight="normal" text-anchor="end" textLength="9.7" lengthAdjust="spacingAndGlyphs" >500</text><text x="438.50" y="290.20" font-size="6.8" fill="#fff" font-weight="bold" text-anchor="start" textLength="25.0" lengthAdjust="spacingAndGlyphs" >Factories</text><text x="438.50" y="302.00" font-size="6.8" fill="#fff" font-weight="bold" text-anchor="start" textLength="6.5" lengthAdjust="spacingAndGlyphs" >F1</text><text x="438.00" y="316.00" font-size="6.8" fill="#e0e3ec" font-weight="normal" text-anchor="start" textLength="36.2" lengthAdjust="spacingAndGlyphs" >Rows: 1-2 of 2</text><path d="M489,311.6l-2,2.1l2,2.1 M491.5,311.6l-2,2.1l2,2.1 M499,311.6l-2,2.1l2,2.1 M506.3,311.6l2,2.1l-2,2.1 M514.8,311.6l2,2.1l-2,2.1 M517.3,311.6l2,2.1l-2,2.1" stroke="#aab0c4" stroke-width="0.8" fill="none"/><rect x="727.8" y="271.5" width="3" height="26.3" rx="1.2" fill="#56628a"/><circle cx="13.24" cy="14.25" r="1.30" fill="#8b8f5c"/><circle cx="15.84" cy="12.56" r="1.17" fill="#9a9e6a"/><circle cx="15.06" cy="16.98" r="1.30" fill="#a9ad84"/><circle cx="17.92" cy="15.16" r="1.04" fill="#7d8468"/><circle cx="16.62" cy="16.72" r="0.72" fill="#f2f2f2"/><circle cx="20.26" cy="13.08" r="1.04" fill="#454a58"/><circle cx="21.04" cy="16.46" r="1.17" fill="#3f4c68"/><circle cx="18.44" cy="18.80" r="1.30" fill="#46546f"/><circle cx="16.36" cy="20.10" r="1.04" fill="#3e4a62"/><circle cx="20.78" cy="19.58" r="1.04" fill="#3a4560"/><circle cx="12.98" cy="19.06" r="0.78" fill="#55584c"/><circle cx="175.74" cy="14.25" r="1.30" fill="#8b8f5c"/><circle cx="178.34" cy="12.56" r="1.17" fill="#9a9e6a"/><circle cx="177.56" cy="16.98" r="1.30" fill="#a9ad84"/><circle cx="180.42" cy="15.16" r="1.04" fill="#7d8468"/><circle cx="179.12" cy="16.72" r="0.72" fill="#f2f2f2"/><circle cx="182.76" cy="13.08" r="1.04" fill="#454a58"/><circle cx="183.54" cy="16.46" r="1.17" fill="#3f4c68"/><circle cx="180.94" cy="18.80" r="1.30" fill="#46546f"/><circle cx="178.86" cy="20.10" r="1.04" fill="#3e4a62"/><circle cx="183.28" cy="19.58" r="1.04" fill="#3a4560"/><circle cx="175.48" cy="19.06" r="0.78" fill="#55584c"/><circle cx="325.90" cy="60.53" r="1.42" fill="#d9cc55"/><circle cx="328.94" cy="58.06" r="1.23" fill="#c9bf58"/><circle cx="327.80" cy="63.95" r="1.52" fill="#e6dc6a"/><circle cx="331.03" cy="61.29" r="1.33" fill="#f4efb0"/><circle cx="325.33" cy="66.61" r="1.04" fill="#9c9650"/><circle cx="329.70" cy="66.23" r="1.04" fill="#b8b060"/><circle cx="334.26" cy="57.87" r="1.14" fill="#3c55a0"/><circle cx="337.11" cy="60.34" r="1.23" fill="#34509a"/><circle cx="337.87" cy="64.14" r="1.23" fill="#2f4a94"/><circle cx="333.88" cy="63.76" r="1.14" fill="#3a58a8"/><circle cx="332.74" cy="67.56" r="1.33" fill="#30488c"/><circle cx="336.16" cy="67.56" r="1.14" fill="#2c4385"/><circle cx="330.08" cy="69.27" r="1.04" fill="#2a3f78"/><circle cx="335.21" cy="61.29" r="0.95" fill="#4a66b8"/><path d="M154.20000000000002,13.4l5.2,5.2m0,-5.2l-5.2,5.2" stroke="#fff" stroke-width="0.95" fill="none"/><path d="M315.79999999999995,13.4l5.2,5.2m0,-5.2l-5.2,5.2" stroke="#e8eaed" stroke-width="0.95" fill="none"/><line x1="329" x2="329" y1="10" y2="22" stroke="#4a4b4f" stroke-width="1"/><path d="M340.2,16.1h8.2 M344.3,12v8.2" stroke="#fff" stroke-width="1.3"/><path d="M638,7.4l3.4,3.4l3.4,-3.4" stroke="#d8d8d8" stroke-width="0.9" fill="none"/><path d="M669.4,9.1h7" stroke="#e0e0e0" stroke-width="1"/><rect x="700.6" y="5.4" width="6.8" height="6.8" rx="1.3" stroke="#e0e0e0" stroke-width="0.95" fill="none"/><path d="M731.6,5.4l7.2,7.2m0,-7.2l-7.2,7.2" stroke="#f0f0f0" stroke-width="0.95" fill="none"/><path d="M18.6,40.1h-8.4 M14.2,36l-4.1,4.1l4.1,4.1" stroke="#fff" stroke-width="1.25" fill="none"/><path d="M31,40.1h8.4 M35.4,36l4.1,4.1l-4.1,4.1" stroke="#707276" stroke-width="1.25" fill="none"/><path d="M61.2,37.2A4.3,4.3 0 1 0 62,41.5" stroke="#fff" stroke-width="1.3" fill="none"/><path d="M62.6,35.2v3.6h-3.6z" fill="#fff"/><rect x="81.9" y="39" width="5.4" height="4.4" rx="0.7" fill="#d5d7db"/><path d="M83.1,39v-1.3a1.5,1.5 0 0 1 3,0v1.3" stroke="#d5d7db" stroke-width="0.9" fill="none"/><circle cx="555.9" cy="39" r="3.1" stroke="#c4c7cc" stroke-width="1" fill="none"/><path d="M558.2,41.4l3,3 M554.4,39h3" stroke="#c4c7cc" stroke-width="1" fill="none"/><path d="M577,39h-2.3v5.4h7.6v-2" stroke="#c4c7cc" stroke-width="1" fill="none"/><path d="M576.6,42.4q0.5,-3.4 4,-3.7v-1.9l3.2,2.9l-3.2,2.9v-1.9q-2.4,0 -4,1.7z" fill="none" stroke="#c4c7cc" stroke-width="0.8" stroke-linejoin="round"/><polygon points="600.20,35.60 601.38,38.68 604.67,38.85 602.10,40.92 602.96,44.10 600.20,42.30 597.44,44.10 598.30,40.92 595.73,38.85 599.02,38.68" stroke="#c4c7cc" stroke-width="0.95" fill="none" stroke-linejoin="round"/><circle cx="736" cy="36.7" r="0.85" fill="#e8eaed"/><circle cx="736" cy="40.1" r="0.85" fill="#e8eaed"/><circle cx="736" cy="43.5" r="0.85" fill="#e8eaed"/><rect x="7.0" y="59.5" width="1.9" height="1.9" fill="#fff"/><rect x="7.0" y="62.6" width="1.9" height="1.9" fill="#fff"/><rect x="7.0" y="65.7" width="1.9" height="1.9" fill="#fff"/><rect x="10.1" y="59.5" width="1.9" height="1.9" fill="#fff"/><rect x="10.1" y="62.6" width="1.9" height="1.9" fill="#fff"/><rect x="10.1" y="65.7" width="1.9" height="1.9" fill="#fff"/><rect x="13.2" y="59.5" width="1.9" height="1.9" fill="#fff"/><rect x="13.2" y="62.6" width="1.9" height="1.9" fill="#fff"/><rect x="13.2" y="65.7" width="1.9" height="1.9" fill="#fff"/><line x1="25.7" x2="25.7" y1="56" y2="70.7" stroke="#fff" stroke-width="1.3"/><path d="M35,59.6h5.4l1.6,1.6v5.4q0,1 -1,1h-6.0q-1,0 -1,-1v-6.0q0,-1 1,-1z" fill="#fff"/><rect x="35.4" y="60.7" width="4.4" height="1.8" fill="#1f2542"/><circle cx="38.0" cy="64.88" r="1.25" fill="#1f2542"/><path d="M52,60.8v6.4q0,1.4 1.4,1.4h6" stroke="#fff" stroke-width="1" fill="none"/><path d="M54.4,58.8h5.0l1.6,1.6v5.0q0,1 -1,1h-5.6q-1,0 -1,-1v-5.6q0,-1 1,-1z" fill="#fff"/><rect x="54.8" y="59.9" width="3.9999999999999996" height="1.8" fill="#1f2542"/><circle cx="57.199999999999996" cy="63.815999999999995" r="1.25" fill="#1f2542"/><circle cx="417" cy="61.300000000000004" r="0.8" fill="#d8dbe6"/><circle cx="417" cy="64.4" r="0.8" fill="#d8dbe6"/><circle cx="417" cy="67.5" r="0.8" fill="#d8dbe6"/><rect x="654" y="56.6" width="43.3" height="15.2" rx="1.2" fill="#1a1f38" stroke="#303d66" stroke-width="0.8"/><text x="655.40" y="62.80" font-size="4.4" fill="#fff" font-weight="bold" text-anchor="start" textLength="9.8" lengthAdjust="spacingAndGlyphs" >CPU</text><text x="655.40" y="70.20" font-size="4.4" fill="#fff" font-weight="bold" text-anchor="start" textLength="10.7" lengthAdjust="spacingAndGlyphs" >RAM</text><rect x="669" y="58.6" width="27.5" height="4.5" fill="#8b8d93"/><rect x="669" y="66.3" width="27.5" height="4.3" fill="#8b8d93"/><rect x="669" y="66.3" width="2.8" height="4.3" fill="#fff"/><rect x="707.3" y="59.1" width="8.4" height="7.5" rx="1.7" stroke="#e6e8f0" stroke-width="1" fill="none"/><path d="M705.7,62.6h1.6 M715.7,62.6h1.6" stroke="#e6e8f0" stroke-width="1.1"/><rect x="709" y="61.2" width="5" height="2.5" rx="0.4" fill="#f4f5f8"/><circle cx="710.4" cy="62.45" r="0.42" fill="#1f2542"/><circle cx="712.6" cy="62.45" r="0.42" fill="#1f2542"/><path d="M710,64.9q1.5,0.9 3,0" stroke="#e6e8f0" stroke-width="0.7" fill="none"/><path d="M709.3,66.6l0.4,1.6l1.7,-1.6z" fill="#e6e8f0"/><line x1="725.3" x2="725.3" y1="56" y2="70.7" stroke="#b4b9c9" stroke-width="1.1"/><path d="M736.6,59.8h-2.1q-1.1,0 -1.1,1.1v5.2q0,1.1 1.1,1.1h2.1" stroke="#e6e8f0" stroke-width="1" fill="none"/><path d="M736.4,63.6h6 M740,61.1l2.5,2.5l-2.5,2.5" stroke="#e6e8f0" stroke-width="1" fill="none"/></svg>
</div></body></html>
